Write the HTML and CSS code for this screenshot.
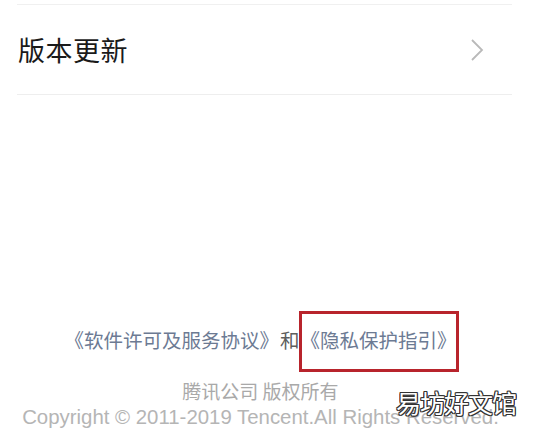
FILE: index.html
```html
<!DOCTYPE html>
<html lang="zh">
<head>
<meta charset="utf-8">
<link rel="stylesheet" href="styles.css">
</head>
<body>
<div class="page">
  <div class="list">
    <div class="row">
      <span class="label">版本更新</span>
      <svg class="chev" width="14" height="24" viewBox="0 0 14 24"><polyline points="2,2 12,12 2,22" fill="none" stroke="#b9b9b9" stroke-width="1.8"/></svg>
    </div>
  </div>
  <div class="footer">
    <div class="links"><span class="link">《软件许可及服务协议》</span><span class="and">和</span><span class="link boxed">《隐私保护指引》</span></div>
    <div class="company">腾讯公司 版权所有</div>
    <div class="copy">Copyright © 2011-2019 Tencent.All Rights Reserved.</div>
  </div>
  <div class="watermark">易坊好文馆</div>
</div>
</body>
</html>
```
FILE: styles.css
```css
html, body { margin: 0; padding: 0; background: #fff; }
body { font-family: "Noto Sans CJK SC", "Noto Sans", sans-serif; }
.page { position: relative; width: 543px; height: 437px; display: flex; flex-direction: column; overflow: hidden; }
.list { margin: 4px 31px 0 17px; border-top: 1px solid #f0f0f0; border-bottom: 1px solid #eeeeee; }
.row { height: 89px; display: flex; align-items: center; justify-content: space-between; padding: 0 28px 0 1px; }
.label { font-size: 27px; color: #1a1a1a; line-height: 1; letter-spacing: 0.5px; }
.chev { display: block; }
.footer { margin-top: auto; padding: 0 22px 7px 0; display: flex; flex-direction: column; align-items: center; }
.links { font-size: 19.5px; line-height: 28px; color: #66768f; display: flex; align-items: center; margin-bottom: 25px; }
.link { color: #6c7a93; }
.and { color: #5e5e5e; margin: 0 1px; }
.boxed { position: relative; }
.boxed::after { content: ""; position: absolute; left: -2px; right: -2px; top: -15px; bottom: -18px; border: 3px solid #b8242c; }
.company { font-size: 19px; line-height: 24px; color: #a9a9a9; margin-bottom: 1px; }
.copy { font-family: "Liberation Sans", Arial, sans-serif; font-size: 20.4px; line-height: 26px; color: #b5b5b5; }
.watermark { position: absolute; left: 396px; top: 386px; font-size: 25px; line-height: 32px; color: #fff; font-family: "Noto Sans CJK SC", sans-serif; letter-spacing: -1px; text-shadow: 1px 0 0 #333, -1px 0 0 #333, 0 1px 0 #333, 0 -1px 0 #333, 1px 1px 0 #333, -1px -1px 0 #333, 1px -1px 0 #333, -1px 1px 0 #333; }
```
